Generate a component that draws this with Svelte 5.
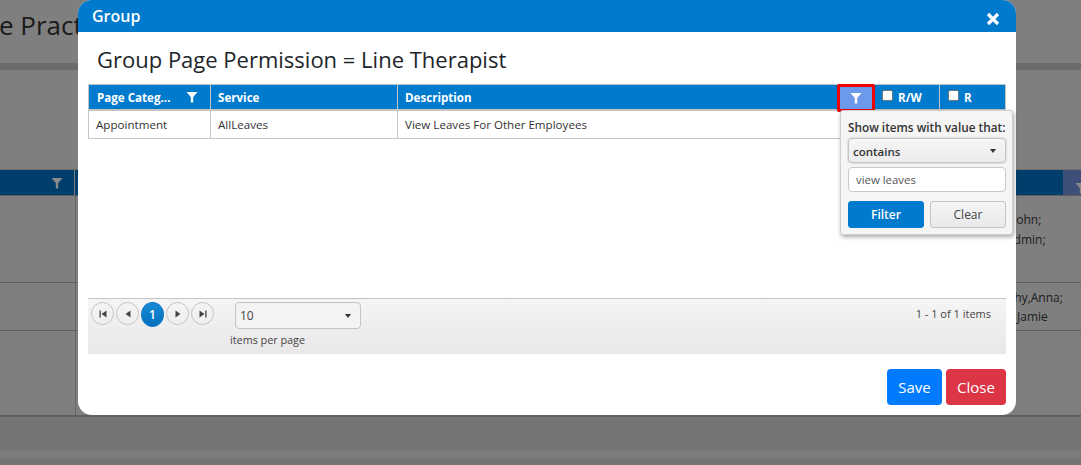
<script lang="ts">
let filterValue = 'view leaves'
const pagerLeft = ['first', 'prev']
const pagerRight = ['next', 'last']
</script>

<div class="page">
    <div class="page-top">
        <h1>e Pract</h1>
    </div>
    <div class="page-band"></div>
    <div class="page-space"></div>
    <div class="bg-head">
        <div class="bg-head-left">
            <svg class="bg-funnel" viewBox="0 0 12 12"><path d="M0.5 1h11L7.2 6v5.5H4.8V6z" /></svg>
        </div>
        <div class="bg-head-fill"></div>
        <div class="bg-head-right">
            <svg class="bg-funnel" viewBox="0 0 12 12"><path d="M0.5 1h11L7.2 6v5.5H4.8V6z" /></svg>
        </div>
    </div>
    <div class="bg-row first">
        <div class="bg-cell-left"></div>
        <div class="bg-cell-right">
            <span class="john">John;</span>
            <span class="admin">Admin;</span>
        </div>
    </div>
    <div class="bg-row second">
        <div class="bg-cell-left"></div>
        <div class="bg-cell-right">
            <span class="kathy">Kathy,Anna;</span>
            <span class="jamie">Jamie</span>
        </div>
    </div>
    <div class="bg-row rest">
        <div class="bg-cell-left"></div>
    </div>
    <div class="page-foot">
        <div class="foot-stripe"></div>
    </div>
</div>

<div class="modal">
    <div class="modal-head">
        <span>Group</span>
        <svg class="close-x" viewBox="0 0 14 14"><path d="M2 2l10 10M12 2L2 12" /></svg>
    </div>

    <div class="modal-body">
        <h2>Group Page Permission = Line Therapist</h2>

        <div class="grid">
            <div class="grid-head">
                <div class="th col-cat">
                    <span>Page Categ...</span>
                    <svg class="funnel" viewBox="0 0 12 12"><path d="M0.5 1h11L7.2 6v5.5H4.8V6z" /></svg>
                </div>
                <div class="th col-service">Service</div>
                <div class="th col-desc">
                    <span>Description</span>
                    <div class="filter-on">
                        <svg class="funnel" viewBox="0 0 12 12"><path d="M0.5 1h11L7.2 6v5.5H4.8V6z" /></svg>
                    </div>
                </div>
                <div class="th col-rw"><i class="check"></i>R/W</div>
                <div class="th col-r"><i class="check"></i>R</div>
            </div>
            <div class="grid-row">
                <div class="td col-cat">Appointment</div>
                <div class="td col-service">AllLeaves</div>
                <div class="td col-rest">View Leaves For Other Employees</div>
            </div>
            <div class="grid-empty"></div>
            <div class="pager">
                <div class="pager-top">
                    <div class="pager-nums">
                        {#each pagerLeft as p}
                            <button class="circle" aria-label={p}>
                                <svg viewBox="0 0 10 10">
                                    {#if p == 'first'}<path d="M1.5 1.5h1.3v7H1.5zM8.5 1.5v7L3.5 5z" />{:else}<path d="M7.5 1.5v7L2.5 5z" />{/if}
                                </svg>
                            </button>
                        {/each}
                        <button class="circle current">1</button>
                        {#each pagerRight as p}
                            <button class="circle" aria-label={p}>
                                <svg viewBox="0 0 10 10">
                                    {#if p == 'last'}<path d="M7.2 1.5h1.3v7H7.2zM1.5 1.5v7L6.5 5z" />{:else}<path d="M2.5 1.5v7L7.5 5z" />{/if}
                                </svg>
                            </button>
                        {/each}
                    </div>
                    <div class="size-box">
                        <div class="size-select">
                            <span>10</span>
                            <i class="caret"></i>
                        </div>
                        <div class="size-label">items per page</div>
                    </div>
                    <div class="pager-info">1 - 1 of 1 items</div>
                </div>
            </div>
        </div>

        <div class="actions">
            <button class="btn save">Save</button>
            <button class="btn close">Close</button>
        </div>
    </div>

    <div class="popup">
        <div class="popup-label">Show items with value that:</div>
        <div class="popup-select">
            <span>contains</span>
            <i class="caret"></i>
        </div>
        <input class="popup-input" type="text" bind:value={filterValue} />
        <div class="popup-btns">
            <button class="pop-btn apply">Filter</button>
            <button class="pop-btn clear">Clear</button>
        </div>
    </div>
</div>

<style>
:global(body) {
    margin: 0;
    overflow: hidden;
    background: #7f7f7f;
    font-family: "Open Sans", "Noto Sans", sans-serif;
}

.page {
    height: 465px;
    display: flex;
    flex-direction: column;
    color: #1c1c1c;
    background: #7f7f7f;
    overflow: hidden;
}

.page-top {
    height: 63px;
    box-sizing: border-box;
    padding-top: 9px;
}

h1 {
    margin: 0 0 0 -1px;
    font-size: 26px;
    line-height: 32px;
    font-weight: 400;
    color: #1a1a1a;
    white-space: nowrap;
}

.page-band {
    height: 7px;
    background: #6c6c6c;
}

.page-space {
    height: 99px;
    border-bottom: 1px solid #6f6f6f;
}

.bg-head {
    height: 25px;
    display: flex;
    background: #003f6b;
    border-bottom: 1px solid #5f5f5f;
}

.bg-head-left {
    width: 75px;
    box-sizing: border-box;
    border-right: 1px solid #7f7f7f;
    display: flex;
    justify-content: flex-end;
    align-items: center;
    padding-right: 11px;
}

.bg-head-fill {
    flex: 1;
}

.bg-head-right {
    width: 18px;
    box-sizing: border-box;
    background: #3e4f7a;
    padding: 7px 0 0 12px;
    overflow: hidden;
}

.bg-funnel {
    width: 12px;
    height: 12px;
    flex: none;
    fill: #8a8a8a;
}

.bg-row {
    display: flex;
    box-sizing: border-box;
    border-bottom: 1px solid #5f5f5f;
}

.bg-row.first {
    height: 87px;
}

.bg-row.second {
    height: 48px;
}

.bg-row.rest {
    flex: 1;
    border-bottom: 0;
}

.bg-cell-left {
    width: 76px;
    border-right: 1px solid #666;
    box-sizing: border-box;
}

.bg-cell-right {
    margin-left: auto;
    width: 81px;
    box-sizing: border-box;
    display: flex;
    flex-direction: column;
    font-size: 12px;
    line-height: 20px;
    color: #1c1c1c;
    white-space: nowrap;
}

.bg-row.first .bg-cell-right {
    padding-top: 14px;
}

.bg-row.second .bg-cell-right {
    padding-top: 5px;
}

.john {
    margin-left: 13px;
}

.admin {
    margin-left: 6px;
}

.kathy {
    margin-left: -4px;
}

.jamie {
    margin-left: 17px;
    line-height: 18px;
}

.page-foot {
    height: 50px;
    box-sizing: border-box;
    background: #747474;
    border-top: 2px solid #5f5f5f;
    padding-top: 33px;
}

.foot-stripe {
    height: 9px;
    background: #7b7b7b;
}

.modal {
    position: absolute;
    top: 0;
    left: 78px;
    width: 938px;
    height: 415px;
    background: #fff;
    border-radius: 14px;
    color: #212529;
}

.modal-head {
    height: 32px;
    box-sizing: border-box;
    background: #007acc;
    border-radius: 14px 14px 0 0;
    padding: 0 16px 0 14px;
    display: flex;
    align-items: center;
    justify-content: space-between;
    color: #fff;
    font-size: 16px;
    font-weight: 600;
}

.close-x {
    width: 14px;
    height: 14px;
    margin-top: 5px;
    fill: none;
    stroke: #fff;
    stroke-width: 3.2;
}

.modal-body {
    padding: 0 10px;
}

h2 {
    margin: 0;
    height: 52px;
    box-sizing: border-box;
    padding: 13px 0 0 9px;
    font-size: 22px;
    line-height: 29px;
    font-weight: 500;
    color: #212529;
    white-space: nowrap;
}

.grid {
    width: 918px;
    font-size: 11.6px;
}

.grid-head {
    display: flex;
    height: 27px;
    box-sizing: border-box;
    background: #007acc;
    border: 1px solid #c4c4c4;
    border-bottom-width: 2px;
    color: #fff;
    font-weight: 700;
}

.th {
    box-sizing: border-box;
    display: flex;
    align-items: center;
    padding-left: 7px;
    border-right: 1px solid #c4c4c4;
    white-space: nowrap;
}

.col-cat {
    width: 122px;
    flex: none;
}

.th.col-cat {
    justify-content: space-between;
    padding-left: 8px;
    padding-right: 12px;
}

.col-service {
    width: 187px;
    flex: none;
}

.col-desc {
    flex: 1;
    justify-content: space-between;
    padding-right: 0;
    border-right: 0;
}

.filter-on {
    box-sizing: border-box;
    width: 38px;
    height: 28px;
    background: #6c99ea;
    border: 3px solid #ee0000;
    border-radius: 2px;
    display: flex;
    align-items: center;
    justify-content: center;
    position: relative;
    top: 1px;
}

.funnel {
    width: 12px;
    height: 12px;
    flex: none;
    fill: #fff;
}

.col-rw {
    width: 65px;
    flex: none;
    padding-left: 7px;
    align-items: flex-start;
    padding-top: 5px;
}

.col-r {
    width: 65px;
    flex: none;
    padding-left: 8px;
    border-right: 0;
    align-items: flex-start;
    padding-top: 5px;
}

.check {
    width: 11px;
    height: 11px;
    box-sizing: border-box;
    background: #fff;
    border: 1px solid #777;
    border-radius: 2px;
    margin: 0 5px 0 0;
    display: block;
}

.grid-row {
    display: flex;
    height: 28px;
    box-sizing: border-box;
    border: 1px solid #c4c4c4;
    border-top: 0;
    color: #333;
}

.td {
    box-sizing: border-box;
    padding: 6px 7px 0 7px;
    border-right: 1px solid #c4c4c4;
    white-space: nowrap;
}

.col-rest {
    flex: 1;
    border-right: 0;
}

.grid-empty {
    height: 159px;
}

.pager {
    height: 56px;
    box-sizing: border-box;
    border-top: 1px solid #c4c4c4;
    background: linear-gradient(#f5f5f5, #e9e7e8);
    padding: 3px 15px 0 3px;
    color: #444;
}

.pager-top {
    display: flex;
    align-items: flex-start;
}

.pager-nums {
    display: flex;
    gap: 2px;
    width: 144px;
    flex: none;
}

.circle {
    box-sizing: border-box;
    width: 23px;
    height: 23px;
    padding: 0;
    border: 1px solid #c4c4c4;
    border-radius: 50%;
    background: transparent;
    display: flex;
    align-items: center;
    justify-content: center;
    font-family: inherit;
    font-size: 12px;
}

.circle svg {
    width: 10px;
    height: 10px;
    fill: #444;
}

.current {
    height: 25px;
    background: linear-gradient(#1a8ad6, #0070bd);
    border-color: #0878c4;
    color: #fff;
    font-weight: 600;
}

.size-box {
    width: 126px;
    flex: none;
}

.size-select {
    box-sizing: border-box;
    height: 27px;
    border: 1px solid #c4c4c4;
    border-radius: 4px;
    background: #f3f3f3;
    display: flex;
    align-items: center;
    justify-content: space-between;
    padding: 0 9px 0 4px;
    font-size: 12px;
}

.size-label {
    margin: 3px 0 0 -5px;
    font-size: 10.8px;
    line-height: 16px;
    white-space: nowrap;
}

.caret {
    display: block;
    width: 0;
    height: 0;
    border-left: 3px solid transparent;
    border-right: 3px solid transparent;
    border-top: 4px solid #333;
}

.pager-info {
    margin-left: auto;
    font-size: 11px;
    line-height: 24px;
    white-space: nowrap;
}

.actions {
    display: flex;
    justify-content: flex-end;
    gap: 4px;
    margin-top: 15px;
}

.btn {
    height: 36px;
    box-sizing: border-box;
    border: 0;
    border-radius: 4px;
    color: #fff;
    font-family: inherit;
    font-size: 15px;
    padding: 0;
}

.save {
    width: 55px;
    background: #007bff;
}

.close {
    width: 60px;
    background: #dc3545;
}

.popup {
    position: absolute;
    left: 762px;
    top: 110px;
    width: 173px;
    height: 125px;
    box-sizing: border-box;
    background: #f5f5f5;
    border: 1px solid #d0d0d0;
    border-radius: 3px;
    box-shadow: 1px 2px 4px rgba(0, 0, 0, 0.35);
    padding: 7px 6px 0 7px;
    font-size: 12px;
    color: #333;
}

.popup-label {
    font-size: 11.8px;
    line-height: 18px;
    font-weight: 600;
    white-space: nowrap;
}

.popup-select {
    box-sizing: border-box;
    height: 25px;
    margin-top: 2px;
    border: 1px solid #c4c4c4;
    border-radius: 4px;
    background: linear-gradient(#f6f6f6, #ececec);
    box-shadow: 0 0 2px rgba(0, 0, 0, 0.3);
    display: flex;
    align-items: center;
    justify-content: space-between;
    padding: 1px 9px 0 4px;
    font-weight: 600;
    font-size: 11.5px;
}

.popup-input {
    display: block;
    box-sizing: border-box;
    width: 158px;
    height: 25px;
    margin-top: 4px;
    border: 1px solid #c9c9c9;
    border-radius: 4px;
    background: #fff;
    padding: 0 7px;
    font-family: inherit;
    font-size: 11.4px;
    color: #555;
    outline: none;
}

.popup-btns {
    display: flex;
    gap: 6px;
    margin-top: 9px;
}

.pop-btn {
    width: 76px;
    height: 27px;
    box-sizing: border-box;
    border-radius: 3px;
    font-family: inherit;
    font-size: 12px;
    padding: 0;
}

.apply {
    background: #007acc;
    border: 1px solid #007acc;
    color: #fff;
    font-weight: 600;
}

.clear {
    background: linear-gradient(#f5f5f5, #e9e9e9);
    border: 1px solid #c4c4c4;
    color: #444;
}
</style>
